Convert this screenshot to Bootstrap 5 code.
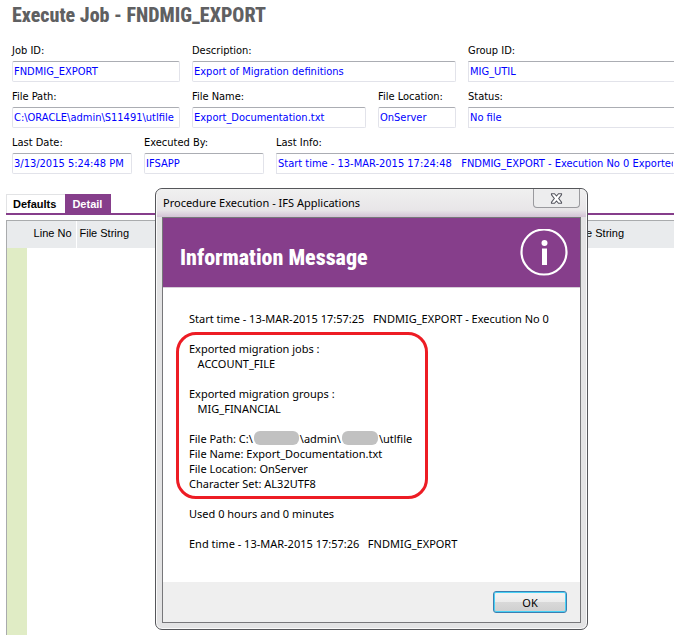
<!DOCTYPE html>
<html lang="en">
<head>
<meta charset="utf-8">
<meta name="viewport" content="width=device-width, initial-scale=1">
<title>Execute Job - FNDMIG_EXPORT</title>
<link href="https://cdn.jsdelivr.net/npm/bootstrap@5.3.0/dist/css/bootstrap.min.css" rel="stylesheet">
<style>
  :root { --ifs-purple: #863e8b; --ifs-grey: #e9ebed; --ifs-heading: "Roboto Condensed", "Open Sans Condensed", Roboto, sans-serif; }
  body { font-family: "DejaVu Sans Condensed", "DejaVu Sans", sans-serif; font-size: 11px; line-height: 16px; color: #000; background: #fff; }
  .job-window { min-height: 100vh; }
  .job-title { font: 800 20px/28px var(--ifs-heading); color: #5f6062; padding: 1px 12px 14px; }
  .job-form { padding-left: 12px; row-gap: 7px; }
  .field-row { display: grid; column-gap: 12px; }
  .row-job { grid-template-columns: 168px 264px 1fr; }
  .row-file { grid-template-columns: 168px 174px 78px 1fr; }
  .row-run { grid-template-columns: 120px 120px 1fr; }
  .field-label { margin-bottom: 2px; white-space: nowrap; }
  .field-input.form-control { height: 21px; min-height: 21px; padding: 0 1px; font-size: inherit; line-height: 19px; color: #00f; border: 1px solid #e2e3ea; border-top-color: #abadb3; border-radius: 2px; background: #fff; }
  .job-tabs { margin: 20px 0 5px 6px; border-bottom: 2px solid var(--ifs-purple); font: bold 11px/19px "Liberation Sans", sans-serif; }
  .job-tabs .nav-link { padding: 0 9px 0 6px; color: #000; border: 0; border-top: 1px solid #e2e3e5; border-left: 1px solid #e2e3e5; border-radius: 0; line-height: 18px; }
  .job-tabs .nav-link.active { color: #fff; background: var(--ifs-purple); border-color: var(--ifs-purple); }
  .job-grid { margin-left: 6px; border-top: 1px solid #a9abad; border-left: 1px solid #a9abad; }
  .job-grid table { width: 100%; table-layout: fixed; font: 11px/15px "Liberation Sans", sans-serif; border-collapse: collapse; flex: 1; }
  .job-grid th { height: 27px; padding: 0 4px 2px 3px; font-weight: normal; background: var(--ifs-grey); white-space: nowrap; overflow: hidden; }
  .job-grid th + th { border-left: 1px solid #fff; }
  .row-marks { width: 20px; flex: 1; background: #e0ecc5; }
  .c-line { width: 69px; } .c-string { width: 495px; }
  .msg-dialog { position: absolute; top: 188px; left: 155px; width: 433px; padding: 0 6px 6px; font: 11px/15px "Noto Sans", sans-serif; background: #e3e3e4; border: 1px solid #55565a; border-radius: 7px; box-shadow: inset 0 0 0 1px #fafafa; }
  .msg-titlebar { height: 28px; background: linear-gradient(#f0f0f0, #e8e6e8 75%, #d3c2d5); margin: 0 -5px; padding: 0 6px; border-radius: 6px 6px 0 0; }
  .msg-caption { padding-top: 6px; }
  .msg-close { width: 47px; height: 19px; border: 1px solid #9a9a9e; border-top: 0; border-radius: 0 0 4px 4px; background: #ededee; padding: 0; }
  .msg-panel { border: 1px solid #77777a; background: #fff; }
  .msg-banner { height: 69px; padding: 0 12px 0 17px; color: #fff; background: var(--ifs-purple); }
  .msg-banner h2 { font: 800 22px/28px var(--ifs-heading); padding-top: 10px; }
  .msg-text { padding: 23px 13px 31px; border-top: 1px solid #d6cdd8; }
  .msg-text p { margin: 0; min-height: 15px; white-space: pre; }
  .msg-text > p { padding-left: 13px; }
  .msg-result { width: 252px; margin: 6px 0 7px; padding: 6px 10px 5px; border: 3px solid #ed1c24; border-radius: 20px; }
  .masked { height: 14px; margin: 0 1px; border-radius: 6px; background: #c1c1c1; }
  .masked-home { width: 45px; } .masked-host { width: 36px; }
  .msg-actions { height: 40px; padding: 0 13px; background: #efefef; }
  .msg-ok { width: 74px; height: 22px; padding: 0; font: inherit; color: #000; border: 1px solid #3c7fb1; border-radius: 3px; background: linear-gradient(#f2f2f2 0 20%, #ebebeb 50%, #d9d9d9 50%, #cfcfcf); box-shadow: inset 0 0 0 1px #48d1f5; }
</style>
</head>
<body class="overflow-hidden">
<main class="job-window d-flex flex-column">
  <h1 class="job-title m-0">Execute Job - FNDMIG_EXPORT</h1>
  <form class="job-form d-flex flex-column">
    <div class="field-row row-job">
      <div><label class="field-label d-block" for="jobId">Job ID:</label><input class="form-control field-input" id="jobId" value="FNDMIG_EXPORT"></div>
      <div><label class="field-label d-block" for="desc">Description:</label><input class="form-control field-input" id="desc" value="Export of Migration definitions"></div>
      <div><label class="field-label d-block" for="group">Group ID:</label><input class="form-control field-input rounded-0 border-end-0" id="group" value="MIG_UTIL"></div>
    </div>
    <div class="field-row row-file">
      <div><label class="field-label d-block" for="path">File Path:</label><input class="form-control field-input" id="path" value="C:\ORACLE\admin\S11491\utlfile"></div>
      <div><label class="field-label d-block" for="fname">File Name:</label><input class="form-control field-input" id="fname" value="Export_Documentation.txt"></div>
      <div><label class="field-label d-block" for="loc">File Location:</label><input class="form-control field-input" id="loc" value="OnServer"></div>
      <div><label class="field-label d-block" for="status">Status:</label><input class="form-control field-input rounded-0 border-end-0" id="status" value="No file"></div>
    </div>
    <div class="field-row row-run">
      <div><label class="field-label d-block" for="date">Last Date:</label><input class="form-control field-input" id="date" value="3/13/2015 5:24:48 PM"></div>
      <div><label class="field-label d-block" for="by">Executed By:</label><input class="form-control field-input" id="by" value="IFSAPP"></div>
      <div><label class="field-label d-block" for="info">Last Info:</label><input class="form-control field-input rounded-0 border-end-0" id="info" value="Start time - 13-MAR-2015 17:24:48   FNDMIG_EXPORT - Execution No 0 Exported migration jobs"></div>
    </div>
  </form>
  <nav class="job-tabs nav">
    <a class="nav-link" href="#defaults">Defaults</a>
    <a class="nav-link active" href="#detail" aria-current="page">Detail</a>
  </nav>
  <section class="job-grid d-flex flex-column flex-grow-1" id="detail">
    <div class="d-flex">
      <table>
        <colgroup><col class="c-line"><col class="c-string"><col></colgroup>
        <thead><tr><th class="text-end">Line No</th><th>File String</th><th>File String</th></tr></thead>
      </table>
    </div>
    <div class="row-marks"></div>
  </section>
</main>

<div class="msg-dialog" role="dialog" aria-labelledby="msgCaption">
  <div class="msg-titlebar d-flex justify-content-between align-items-start">
    <span class="msg-caption" id="msgCaption">Procedure Execution - IFS Applications</span>
    <button class="msg-close d-flex align-items-center justify-content-center" type="button" aria-label="Close">
      <svg width="13" height="11" viewBox="0 0 13 11"><path d="M1.500.700h3L6.500 3l2-2.300h3v1.100L8.700 5.500l2.800 3.700v1.100h-3L6.500 8l-2 2.300h-3V9.200l2.800-3.700L1.500 1.800z" fill="#fff" stroke="#55565f" stroke-width="1.100"/></svg>
    </button>
  </div>
  <div class="msg-panel">
    <div class="msg-banner d-flex align-items-center justify-content-between">
      <h2 class="m-0">Information Message</h2>
      <svg width="48" height="48" viewBox="0 0 48 48" fill="none"><circle cx="24" cy="23" r="22.500" stroke="#fff" stroke-width="2.200"/><circle cx="24.500" cy="14" r="3" fill="#fff"/><path d="M22 19.500h5V36h-5z" fill="#fff"/></svg>
    </div>
    <div class="msg-text">
      <p>Start time - 13-MAR-2015 17:57:25   FNDMIG_EXPORT - Execution No 0</p>
      <div class="msg-result">
        <p>Exported migration jobs :</p>
        <p>   ACCOUNT_FILE</p>
        <p></p>
        <p>Exported migration groups :</p>
        <p>   MIG_FINANCIAL</p>
        <p></p>
        <p class="d-flex"><span>File Path: C:\</span><span class="masked masked-home"></span><span>\admin\</span><span class="masked masked-host"></span><span>\utlfile</span></p>
        <p>File Name: Export_Documentation.txt</p>
        <p>File Location: OnServer</p>
        <p>Character Set: AL32UTF8</p>
      </div>
      <p>Used 0 hours and 0 minutes</p>
      <p></p>
      <p>End time - 13-MAR-2015 17:57:26   FNDMIG_EXPORT</p>
    </div>
    <div class="msg-actions d-flex align-items-center justify-content-end">
      <button class="msg-ok btn" type="button">OK</button>
    </div>
  </div>
</div>
<script src="https://cdn.jsdelivr.net/npm/bootstrap@5.3.0/dist/js/bootstrap.bundle.min.js"></script>
</body>
</html>
